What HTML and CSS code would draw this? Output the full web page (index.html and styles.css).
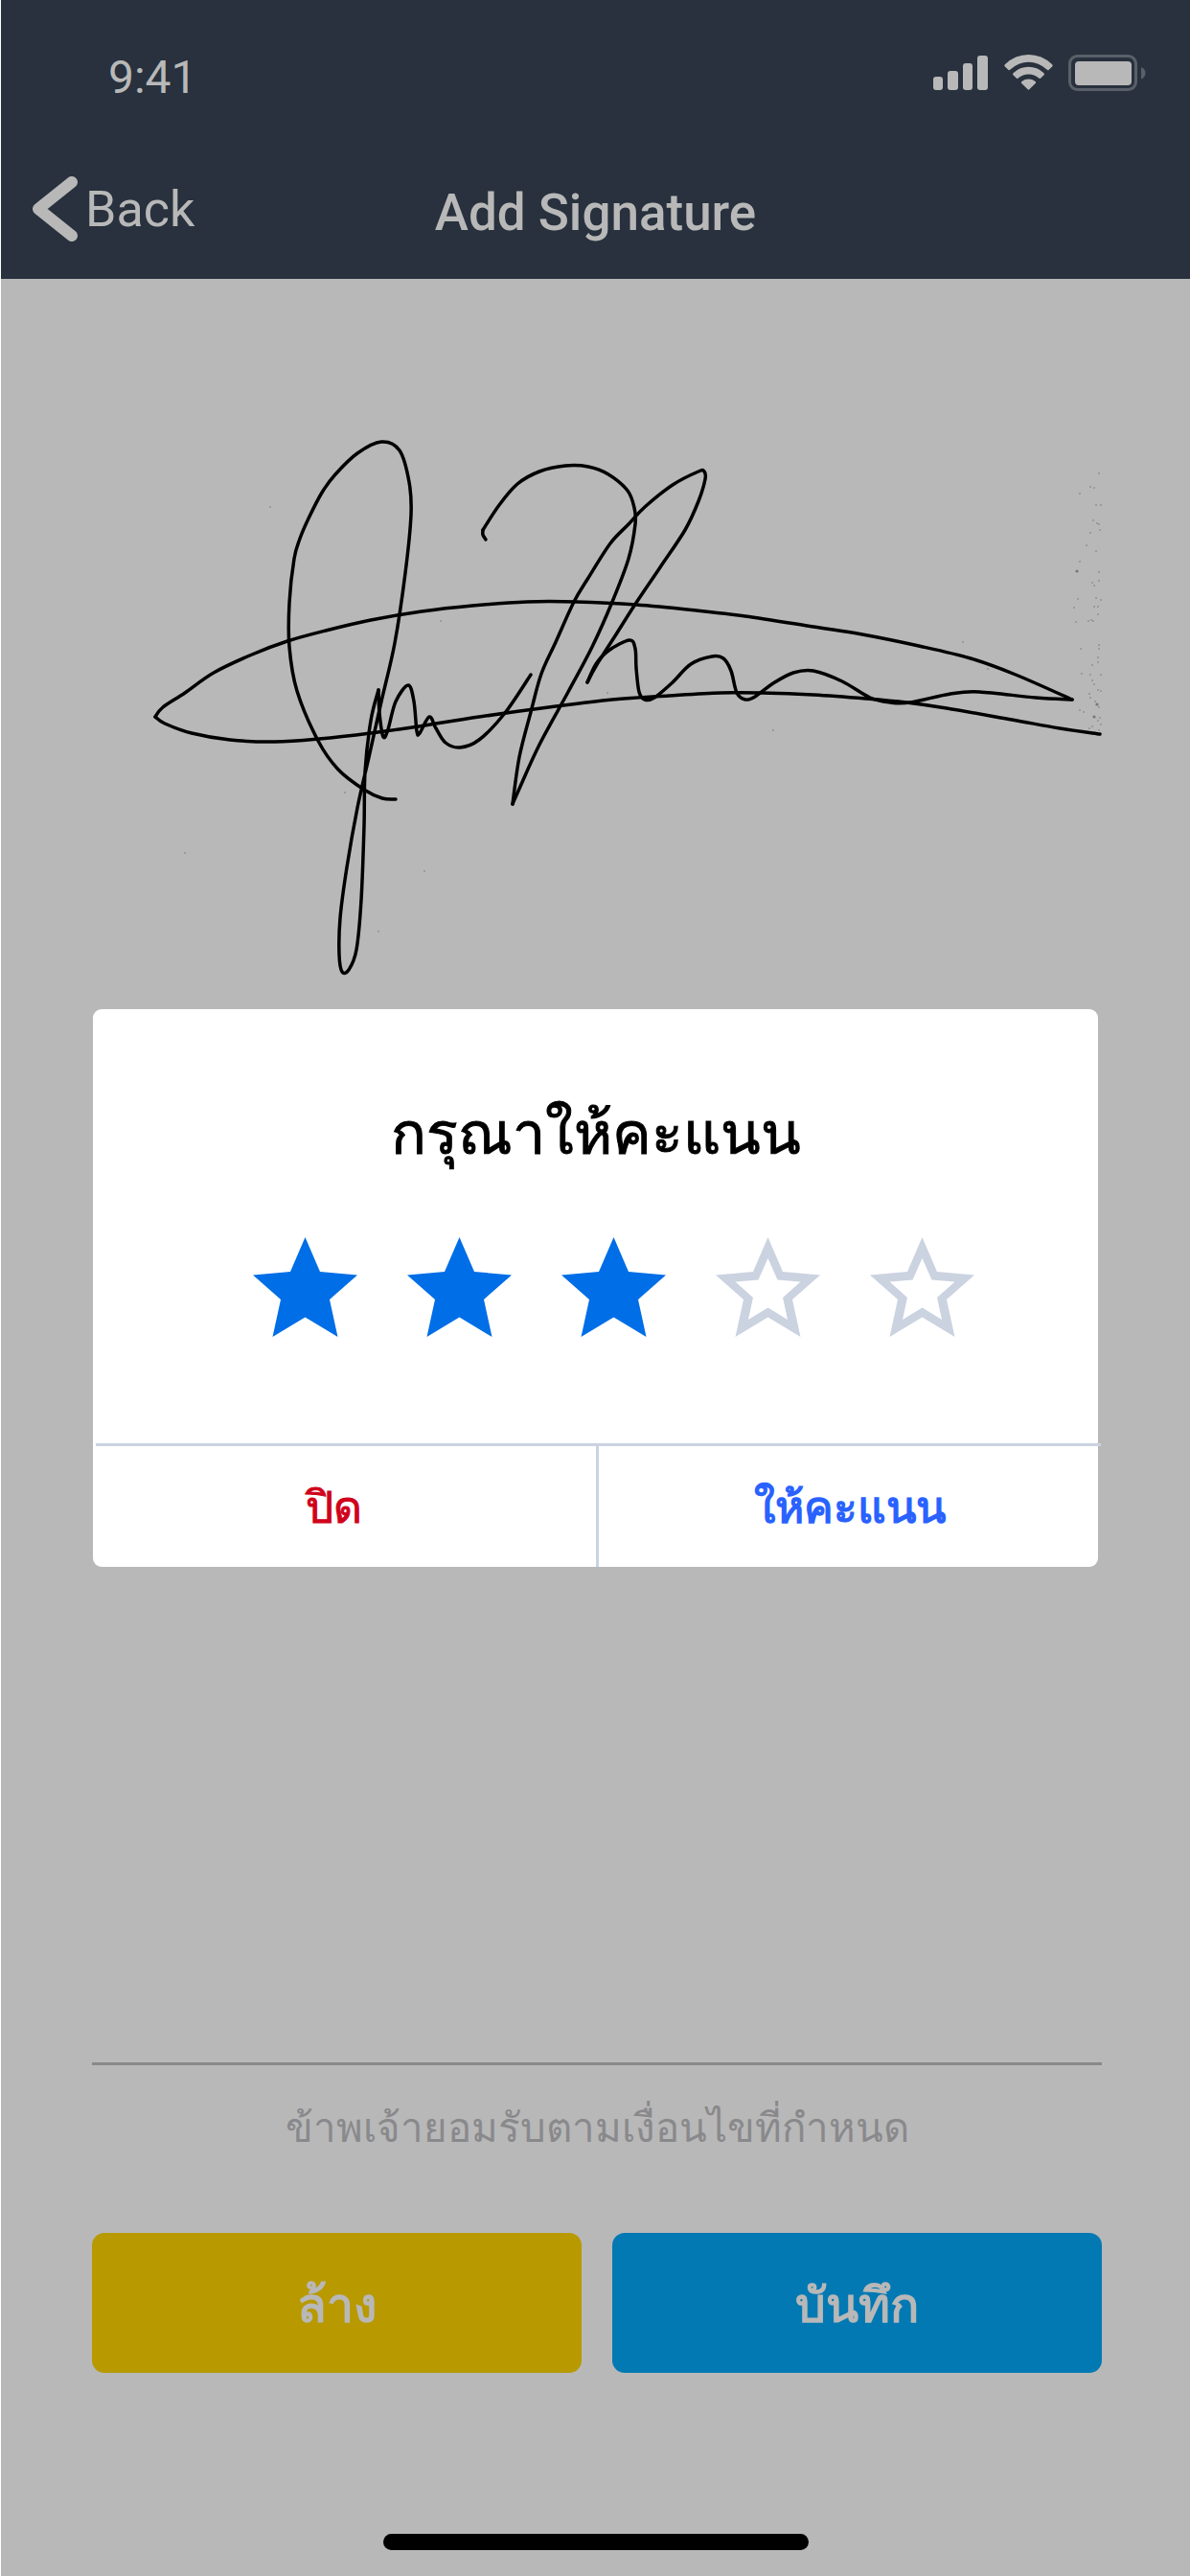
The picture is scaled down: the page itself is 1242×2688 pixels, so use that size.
FILE: index.html
```html
<!DOCTYPE html>
<html lang="th">
<head>
	<meta charset="utf-8">
	<meta name="viewport" content="width=device-width, initial-scale=1">
	<title>Add Signature</title>
	<link rel="stylesheet" href="styles.css">
	<script type="text/javascript" src="signature.js" defer></script>
</head>
<body>
	<header class="header">
		<div class="status">
			<span class="time">9:41</span>
			<div class="statusIcons">
				<svg width="58" height="38" viewBox="0 0 58 38">
					<rect x="0" y="23" width="10" height="14" rx="3"/>
					<rect x="15" y="17" width="11" height="20" rx="3"/>
					<rect x="31" y="9" width="10" height="28" rx="3"/>
					<rect x="46" y="1" width="11" height="36" rx="3"/>
				</svg>
				<svg width="51" height="38" viewBox="0 0 51 38">
					<path d="M.6 12.2Q0 11 .8 10.200Q11.500 0 25.500 0T50.200 10.200Q51 11 50.400 12.200L46.500 16Q45.500 16.500 44.800 15.800Q36 7.800 25.500 7.800T6.200 15.800Q5.500 16.500 4.500 16Z"/>
					<path d="M9.200 21Q8.700 20 9.500 19.200Q16.500 12.800 25.500 12.800T41.500 19.200Q42.300 20 41.800 21L38 24.800Q37 25.300 36.200 24.600Q31.500 20.500 25.500 20.500T14.800 24.600Q14 25.300 13 24.800Z"/>
					<path d="M18 29.700Q17.500 28.600 18.400 28Q21.500 25.600 25.500 25.600T32.600 28Q33.500 28.600 33 29.700L26.300 36.300Q25.500 37 24.700 36.300Z"/>
				</svg>
				<svg width="81" height="38" viewBox="0 0 81 38">
					<rect class="shell" x="1.500" y="1.500" width="69" height="35" rx="8"/>
					<rect x="7" y="7" width="59" height="25" rx="4"/>
					<path class="nub" d="M76 13Q80.500 15 80.500 19.300T76 25.600Z"/>
				</svg>
			</div>
		</div>
		<nav class="nav">
			<a class="back" href="#">
				<svg width="48" height="68" viewBox="0 0 48 68">
					<path d="M42 6L7 34L42 62"/>
				</svg>
				Back
			</a>
			<h1 class="title">Add Signature</h1>
		</nav>
	</header>

	<main class="main">
		<div class="pad">
			<svg id="signature" viewBox="96 440 1054 600"></svg>
		</div>
		<p class="consent">ข้าพเจ้ายอมรับตามเงื่อนไขที่กำหนด</p>
		<div class="buttons">
			<button type="button" class="button clear">ล้าง</button>
			<button type="button" class="button save">บันทึก</button>
		</div>
	</main>
	<div class="homeBar"></div>

	<div class="overlay">
		<form class="modal" role="dialog" aria-labelledby="ratingTitle">
			<h2 class="modalTitle" id="ratingTitle">กรุณาให้คะแนน</h2>
			<div class="stars" role="radiogroup" aria-labelledby="ratingTitle">
				<label class="star on">
					<input type="radio" name="rating" value="1" aria-label="1">
					<svg viewBox="0 0 109 104"><use href="#starFull"/></svg>
				</label>
				<label class="star on">
					<input type="radio" name="rating" value="2" aria-label="2">
					<svg viewBox="0 0 109 104"><use href="#starFull"/></svg>
				</label>
				<label class="star on">
					<input type="radio" name="rating" value="3" aria-label="3" checked>
					<svg viewBox="0 0 109 104"><use href="#starFull"/></svg>
				</label>
				<label class="star">
					<input type="radio" name="rating" value="4" aria-label="4">
					<svg viewBox="0 0 109 104"><use href="#starEmpty"/></svg>
				</label>
				<label class="star">
					<input type="radio" name="rating" value="5" aria-label="5">
					<svg viewBox="0 0 109 104"><use href="#starEmpty"/></svg>
				</label>
			</div>
			<div class="actions">
				<button type="button" class="action close">ปิด</button>
				<button type="button" class="action rate">ให้คะแนน</button>
			</div>
		</form>
	</div>

	<svg class="symbols">
		<symbol id="starFull" viewBox="0 0 109 104">
			<path d="M54.500 0L70 36L109 39.500L80 65L88.500 104L54.500 83.500L20.500 104L29 65L0 39.500L39 36Z"/>
		</symbol>
		<symbol id="starEmpty" viewBox="0 0 109 104">
			<path fill-rule="evenodd" d="M54.500 0L70 36L109 39.500L80 65L88.500 104L54.500 83.500L20.500 104L29 65L0 39.500L39 36ZM54.500 22L44.500 44.500L20.500 46.500L39 63L34 86L54.500 73.500L75 86L70 63L88.500 46.500L64.500 44.500Z"/>
		</symbol>
	</svg>
</body>
</html>
```
FILE: styles.css
```css
* {
	box-sizing: border-box;
	margin: 0;
	padding: 0;
}

body {
	display: flex;
	flex-direction: column;
	min-height: 100vh;
	border-left: 1px solid #fff;
	background: #b8b8b8;
	font-family: Roboto, "Noto Sans", sans-serif;
}

svg {
	display: block;
}

button {
	border: none;
	background: none;
	font-family: inherit;
	cursor: pointer;
}

/* header */
.header {
	background: #28313d;
	color: #b8b8b8;
	padding-bottom: 31px;
}

.status {
	display: flex;
	justify-content: space-between;
	align-items: flex-start;
	padding: 57px 46px 0 112px;
}

.time {
	font-size: 48px;
	line-height: 48px;
}

.statusIcons {
	display: flex;
	gap: 16px;
	fill: #b8b8b8;
}

.shell {
	fill: none;
	stroke: #59606a;
	stroke-width: 3;
}

.nub {
	fill: #59606a;
}

.nav {
	display: grid;
	grid-template-columns: 1fr auto 1fr;
	align-items: center;
	height: 84px;
	margin-top: 71px;
	padding: 0 32px;
}

.back {
	display: flex;
	align-items: center;
	gap: 8px;
	color: inherit;
	font-size: 52px;
	text-decoration: none;
}

.back svg {
	fill: none;
	stroke: #b8b8b8;
	stroke-width: 12;
	stroke-linecap: round;
	stroke-linejoin: round;
}

.title {
	padding-top: 8px;
	font-size: 53px;
	font-weight: 500;
}

/* signature */
.main {
	flex: 1;
	display: flex;
	flex-direction: column;
	padding: 0 92px 0 95px;
}

.pad {
	flex: 1;
	padding-top: 149px;
	border-bottom: 3px solid #89898c;
}

#signature {
	width: 100%;
	overflow: visible;
}

.ink {
	fill: none;
	stroke: #000;
	stroke-width: 3.5;
	stroke-linecap: round;
	stroke-linejoin: round;
}

.dust {
	fill: #777;
}

.consent {
	padding: 36px 0 79px;
	color: #89898c;
	font-size: 42px;
	line-height: 60px;
	text-align: center;
}

.buttons {
	display: grid;
	grid-template-columns: 1fr 1fr;
	gap: 32px;
}

.button {
	height: 146px;
	padding-top: 5px;
	border-radius: 13px;
	color: #b8b8b8;
	font-size: 50px;
	font-weight: 600;
}

.clear {
	background: #b89900;
}

.save {
	background: #0279b3;
}

.homeBar {
	width: 444px;
	height: 17px;
	margin: 168px auto 27px;
	border-radius: 9px;
	background: #000;
}

/* rating dialog */
.overlay {
	position: absolute;
	inset: 0;
	display: flex;
	align-items: center;
	padding: 0 96px 0 97px;
}

.modal {
	flex: 1;
	border-radius: 9px;
	background: #fff;
}

.modalTitle {
	padding: 90px 0 68px;
	font-size: 61px;
	font-weight: 500;
	line-height: 80px;
	text-align: center;
	-webkit-text-stroke: 1px #000;
}

.stars {
	display: flex;
	justify-content: center;
	gap: 52px;
	padding: 0 0 111px 37px;
}

.star {
	width: 109px;
	fill: #cbd3e1;
	cursor: pointer;
}

.star.on {
	fill: #006ee6;
}

.star input {
	position: absolute;
	opacity: 0;
}

.actions {
	display: grid;
	grid-template-columns: 1fr 1fr;
	margin: 0 -3px 0 3px;
	border-top: 3px solid #cbd3e1;
}

.action {
	height: 126px;
	font-size: 46px;
}

.close {
	padding-right: 24px;
	border-right: 3px solid #cbd3e1;
	color: #d0021b;
	-webkit-text-stroke: 1px #d0021b;
}

.rate {
	color: #2962ff;
	font-weight: 600;
}

.symbols {
	position: absolute;
	width: 0;
	height: 0;
}
```
FILE: signature.js
```javascript
// pen strokes as x,y pairs, a new stroke starts at every sharp turn
var strokes = [
	[413,834, 399,833, 380,824, 353,803, 332,773, 310,721, 302,675, 302,629, 307,583, 313,562, 322,541, 336,514, 350,495, 373,473, 398,461, 417,470, 427,503, 429,537, 423,598, 412,671, 398,732, 385,790, 373,843, 362,905, 355,958, 354,996, 357,1014, 364,1012, 372,991, 377,939, 380,862, 381,805, 387,752, 395,720],
	[395,720, 396,744, 400,769, 405,761, 413,732, 426,715, 432,732, 435,763, 438,765, 448,748, 455,760, 465,775, 480,780, 500,772, 527,744, 554,704],
	[1148,766, 1106,760, 1056,751, 988,739, 946,733, 904,729, 849,725, 795,723, 752,723, 698,726, 639,730, 580,737, 500,748, 437,758, 387,765, 333,771, 287,774, 240,772, 200,765, 172,755, 162,748],
	[162,748, 170,738, 193,723, 223,702, 263,683, 300,669, 340,658, 387,647, 440,638, 493,632, 550,628, 601,628, 664,631, 727,637, 778,643, 849,654, 900,662, 959,674, 1013,687, 1060,704, 1119,730],
	[1119,730, 1081,728, 1022,722, 992,724, 950,733, 929,733, 908,728, 879,711, 849,700, 828,702, 807,713, 788,727, 778,730, 769,723, 763,700, 755,687, 743,685, 721,693, 702,712, 683,728, 673,730, 667,722, 664,697, 663,677, 657,668, 635,679, 622,693, 613,712],
	[613,712, 622,695, 643,662, 662,632, 689,592, 715,553, 729,523, 736,500, 735,492, 729,492, 702,506, 673,529, 656,547, 637,567, 614,603, 599,628, 580,670, 565,703, 554,743, 542,790, 535,839],
	[535,839, 542,823, 563,777, 593,722, 618,675, 639,628, 656,583, 663,547, 662,530, 655,512, 635,495, 614,487, 590,486, 563,492, 540,505, 521,527, 504,553],
	[504,553, 504,558, 507,563]
];

// scanner dust as x,y,radius
var dust = [
	193,890,1, 443,909,1, 395,972,1, 360,827,1, 282,529,1, 460,648,1, 634,723,1, 807,762,1, 1005,670,1, 1031,698,1,
	1147,494,1, 1138,508,1, 1142,509,1, 1127,515,1, 1144,527,1, 1149,527,1, 1141,543,1, 1145,546,1, 1147,547,1, 1148,553,1,
	1138,556,1, 1134,569,1, 1144,575,1, 1127,586,1, 1124,596,2, 1147,597,1, 1140,608,1, 1142,611,1, 1147,606,1, 1125,625,1,
	1144,624,1, 1149,626,1, 1121,634,1, 1142,633,1, 1146,633,1, 1146,641,1, 1123,649,1, 1136,648,1, 1139,647,1, 1141,648,1,
	1128,677,1, 1147,677,1, 1147,673,1, 1146,686,1, 1140,694,1, 1146,691,1, 1129,703,1, 1138,704,1, 1149,704,1, 1140,710,1,
	1142,714,1, 1146,720,1, 1149,721,1, 1137,724,1, 1138,728,1, 1143,732,1, 1145,735,2, 1147,738,1, 1127,741,1, 1131,743,1,
	1142,748,2, 1148,749,1, 1146,752,1, 1149,756,1, 1140,758,1, 1137,760,1, 1147,762,1
];

function smooth(p) {
	var d = 'M' + p[0] + ' ' + p[1];
	var last = p.length - 2;
	for (var i = 0; i < last; i += 2) {
		var a = Math.max(i - 2, 0), b = i + 2, c = Math.min(i + 4, last);
		d += 'C' + [
			p[i] + (p[b] - p[a]) / 6, p[i + 1] + (p[b + 1] - p[a + 1]) / 6,
			p[b] - (p[c] - p[i]) / 6, p[b + 1] - (p[c + 1] - p[i + 1]) / 6,
			p[b], p[b + 1]
		].join(' ');
	}
	return d;
}

function add(tag, attrs) {
	var el = document.createElementNS('http://www.w3.org/2000/svg', tag);
	for (var name in attrs) {
		el.setAttribute(name, attrs[name]);
	}
	document.getElementById('signature').appendChild(el);
}

strokes.forEach(function(points){
	add('path', { 'class': 'ink', d: smooth(points) });
});

for (var i = 0; i < dust.length; i += 3) {
	add('circle', { 'class': 'dust', cx: dust[i], cy: dust[i + 1], r: dust[i + 2] * 0.8 });
}
```
